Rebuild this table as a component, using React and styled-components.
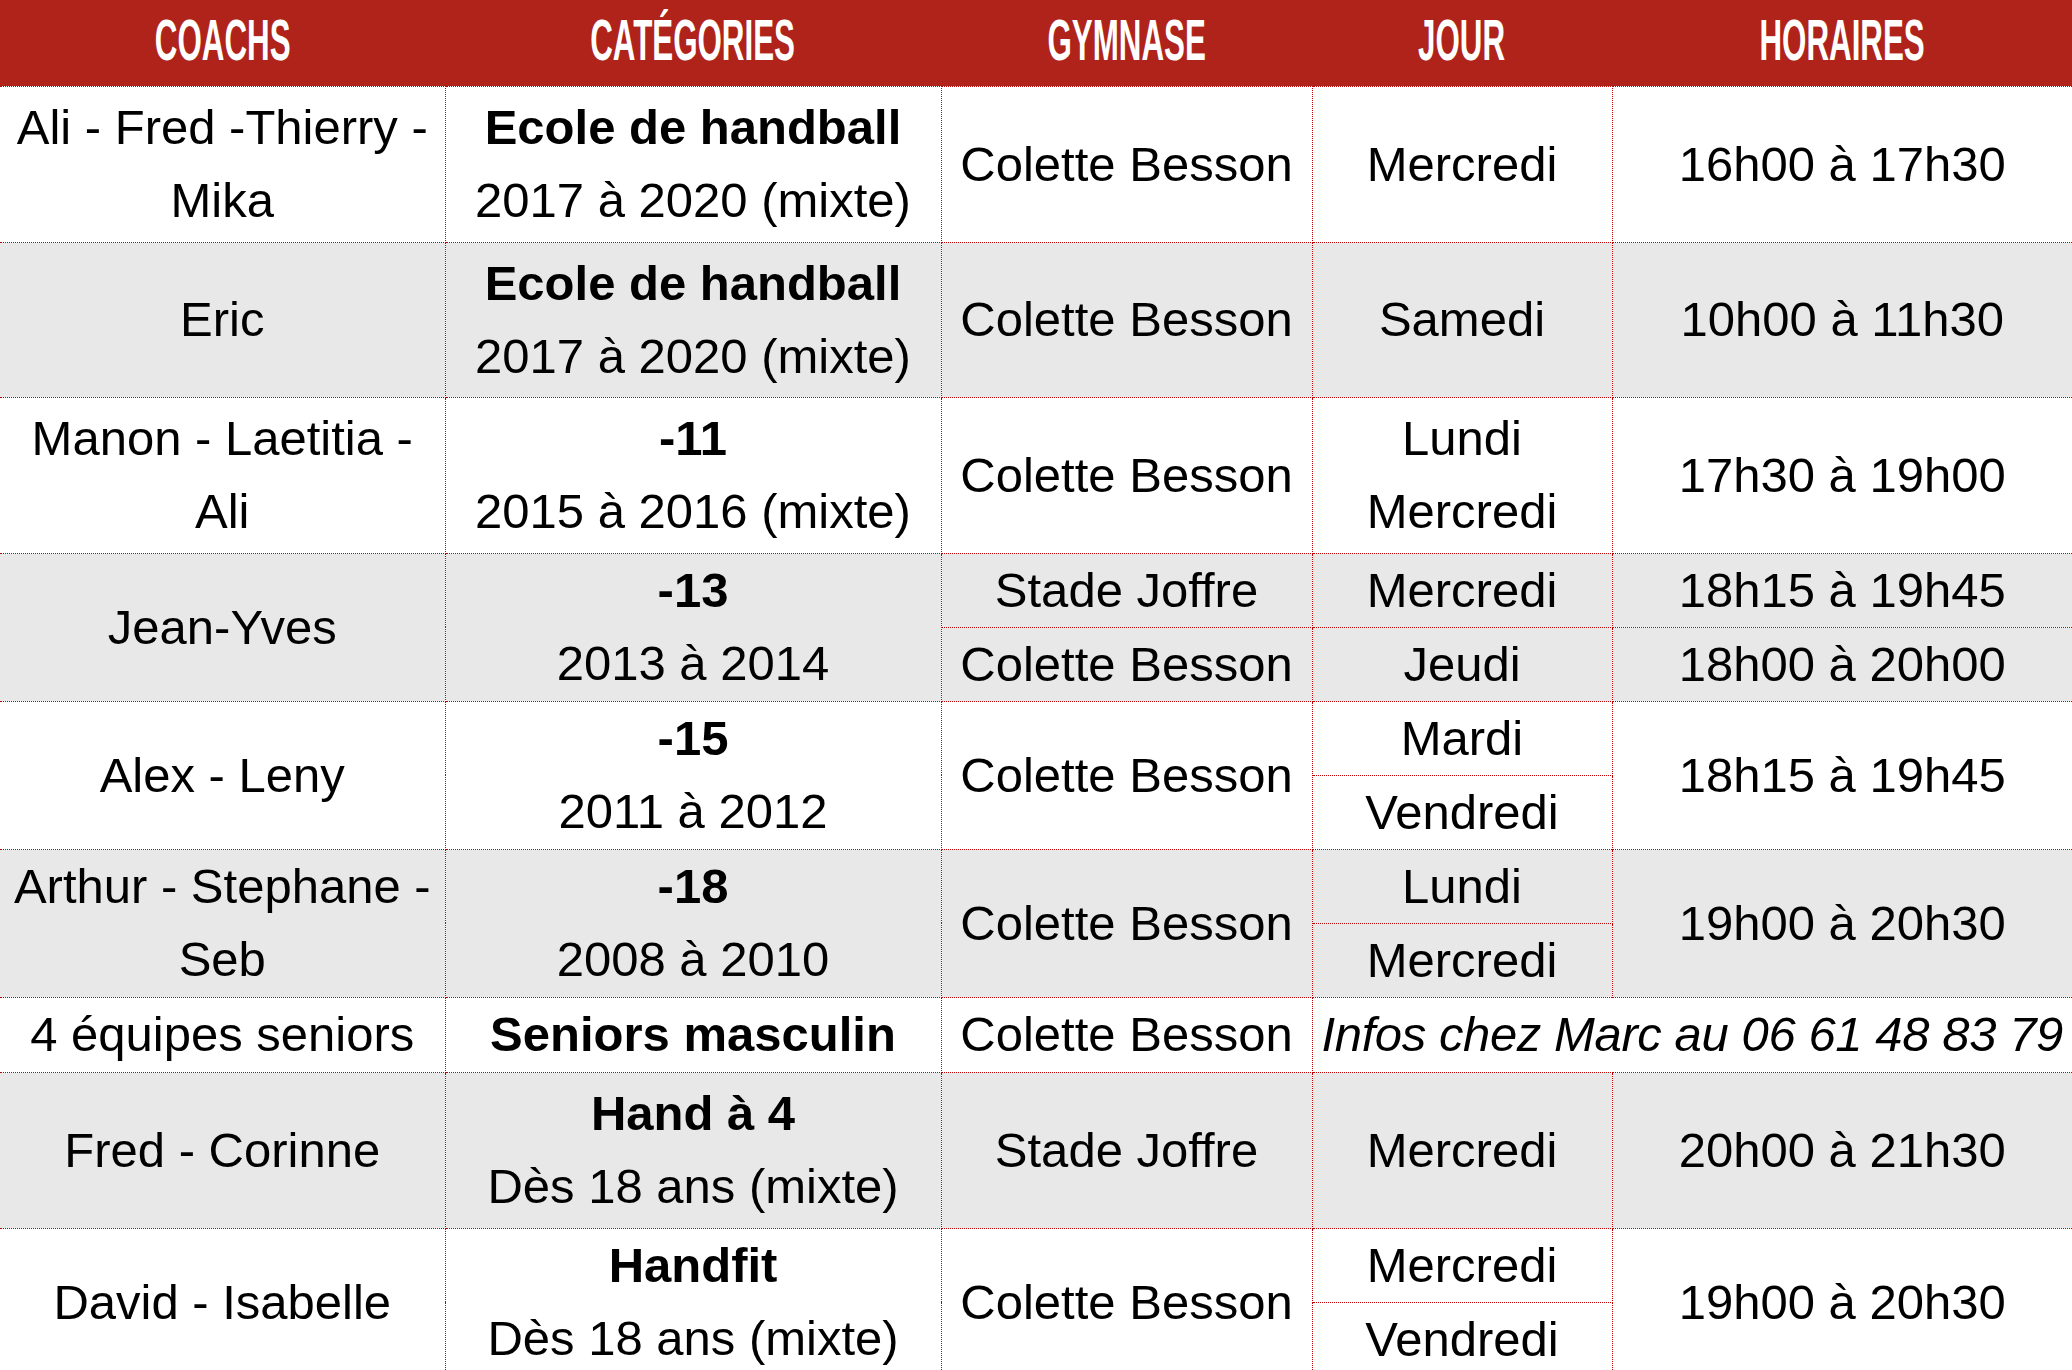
import React from "react";
import styled, { createGlobalStyle } from "styled-components";

const GlobalStyle = createGlobalStyle`
  html, body {
    margin: 0;
    padding: 0;
    background: #ffffff;
    overflow: hidden;
  }
  body {
    font-family: "Liberation Sans", Arial, sans-serif;
  }
`;

const App = () => {
  return (
    <>
      <GlobalStyle />
      <Sheet>
        <colgroup>
          <col style={{ width: 445 }} />
          <col style={{ width: 496 }} />
          <col style={{ width: 371 }} />
          <col style={{ width: 300 }} />
          <col style={{ width: 460 }} />
        </colgroup>
        <thead>
          <tr>
            <Head><HeadLabel>COACHS</HeadLabel></Head>
            <Head><HeadLabel>CATÉGORIES</HeadLabel></Head>
            <Head><HeadLabel>GYMNASE</HeadLabel></Head>
            <Head><HeadLabel>JOUR</HeadLabel></Head>
            <Head><HeadLabel>HORAIRES</HeadLabel></Head>
          </tr>
        </thead>
        <tbody>
          <Row $h={156}>
            <Cell>Ali - Fred -Thierry - Mika</Cell>
            <Cell>
              <Strong>Ecole de handball</Strong>
              <Line>2017 à 2020 (mixte)</Line>
            </Cell>
            <Cell>Colette Besson</Cell>
            <Cell>Mercredi</Cell>
            <Cell>16h00 à 17h30</Cell>
          </Row>
          <Row $h={155} $shade>
            <Cell>Eric</Cell>
            <Cell>
              <Strong>Ecole de handball</Strong>
              <Line>2017 à 2020 (mixte)</Line>
            </Cell>
            <Cell>Colette Besson</Cell>
            <Cell>Samedi</Cell>
            <Cell>10h00 à 11h30</Cell>
          </Row>
          <Row $h={156}>
            <Cell>Manon - Laetitia - Ali</Cell>
            <Cell>
              <Strong>-11</Strong>
              <Line>2015 à 2016 (mixte)</Line>
            </Cell>
            <Cell>Colette Besson</Cell>
            <Cell>
              <Line>Lundi</Line>
              <Line>Mercredi</Line>
            </Cell>
            <Cell>17h30 à 19h00</Cell>
          </Row>

          <Row $h={73} $shade>
            <Cell rowSpan={2}>Jean-Yves</Cell>
            <Cell rowSpan={2}>
              <Strong>-13</Strong>
              <Line>2013 à 2014</Line>
            </Cell>
            <Cell>Stade Joffre</Cell>
            <Cell>Mercredi</Cell>
            <Cell>18h15 à 19h45</Cell>
          </Row>
          <Row $h={73} $shade>
            <Cell>Colette Besson</Cell>
            <Cell>Jeudi</Cell>
            <Cell>18h00 à 20h00</Cell>
          </Row>

          <Row $h={73}>
            <Cell rowSpan={2}>Alex - Leny</Cell>
            <Cell rowSpan={2}>
              <Strong>-15</Strong>
              <Line>2011 à 2012</Line>
            </Cell>
            <Cell rowSpan={2}>Colette Besson</Cell>
            <Cell>Mardi</Cell>
            <Cell rowSpan={2}>18h15 à 19h45</Cell>
          </Row>
          <Row $h={73}>
            <Cell>Vendredi</Cell>
          </Row>

          <Row $h={73} $shade>
            <Cell rowSpan={2}>Arthur - Stephane - Seb</Cell>
            <Cell rowSpan={2}>
              <Strong>-18</Strong>
              <Line>2008 à 2010</Line>
            </Cell>
            <Cell rowSpan={2}>Colette Besson</Cell>
            <Cell>Lundi</Cell>
            <Cell rowSpan={2}>19h00 à 20h30</Cell>
          </Row>
          <Row $h={73} $shade>
            <Cell>Mercredi</Cell>
          </Row>

          <Row $h={75}>
            <Cell>4 équipes seniors</Cell>
            <Cell><Strong>Seniors masculin</Strong></Cell>
            <Cell>Colette Besson</Cell>
            <Cell colSpan={2} $italic>Infos chez Marc au 06 61 48 83 79</Cell>
          </Row>

          <Row $h={156} $shade>
            <Cell>Fred - Corinne</Cell>
            <Cell>
              <Strong>Hand à 4</Strong>
              <Line>Dès 18 ans (mixte)</Line>
            </Cell>
            <Cell>Stade Joffre</Cell>
            <Cell>Mercredi</Cell>
            <Cell>20h00 à 21h30</Cell>
          </Row>

          <Row $h={73}>
            <Cell rowSpan={2}>David - Isabelle</Cell>
            <Cell rowSpan={2}>
              <Strong>Handfit</Strong>
              <Line>Dès 18 ans (mixte)</Line>
            </Cell>
            <Cell rowSpan={2}>Colette Besson</Cell>
            <Cell>Mercredi</Cell>
            <Cell rowSpan={2}>19h00 à 20h30</Cell>
          </Row>
          <Row $h={73}>
            <Cell>Vendredi</Cell>
          </Row>
        </tbody>
      </Sheet>
    </>
  );
};

export default App;

const Sheet = styled.table`
  width: 2072px;
  border-collapse: collapse;
  border-style: hidden;
  table-layout: fixed;
`;

const Head = styled.th`
  box-sizing: border-box;
  height: 86px;
  padding: 0 0 6px;
  background: #b0231a;
  color: #ffffff;
  text-align: center;
  vertical-align: middle;
  overflow: hidden;
`;

const HeadLabel = styled.span`
  display: inline-block;
  font-size: 58px;
  font-weight: 700;
  line-height: 70px;
  transform: scaleX(0.54);
  white-space: nowrap;
`;

const Row = styled.tr`
  height: ${(p) => p.$h}px;
  background: ${(p) => (p.$shade ? "#e8e8e8" : "#ffffff")};
`;

const Cell = styled.td`
  border: 1px dotted #c00000;
  padding: ${(p) => (p.$italic ? "0" : "0 8px")};
  text-align: center;
  vertical-align: middle;
  font-size: 49px;
  line-height: 73px;
  color: #000000;
  font-style: ${(p) => (p.$italic ? "italic" : "normal")};
  letter-spacing: ${(p) => (p.$italic ? "-0.4px" : "normal")};
  white-space: ${(p) => (p.$italic ? "nowrap" : "normal")};
  overflow: hidden;
`;

const Strong = styled.div`
  font-weight: 700;
`;

const Line = styled.div``;
